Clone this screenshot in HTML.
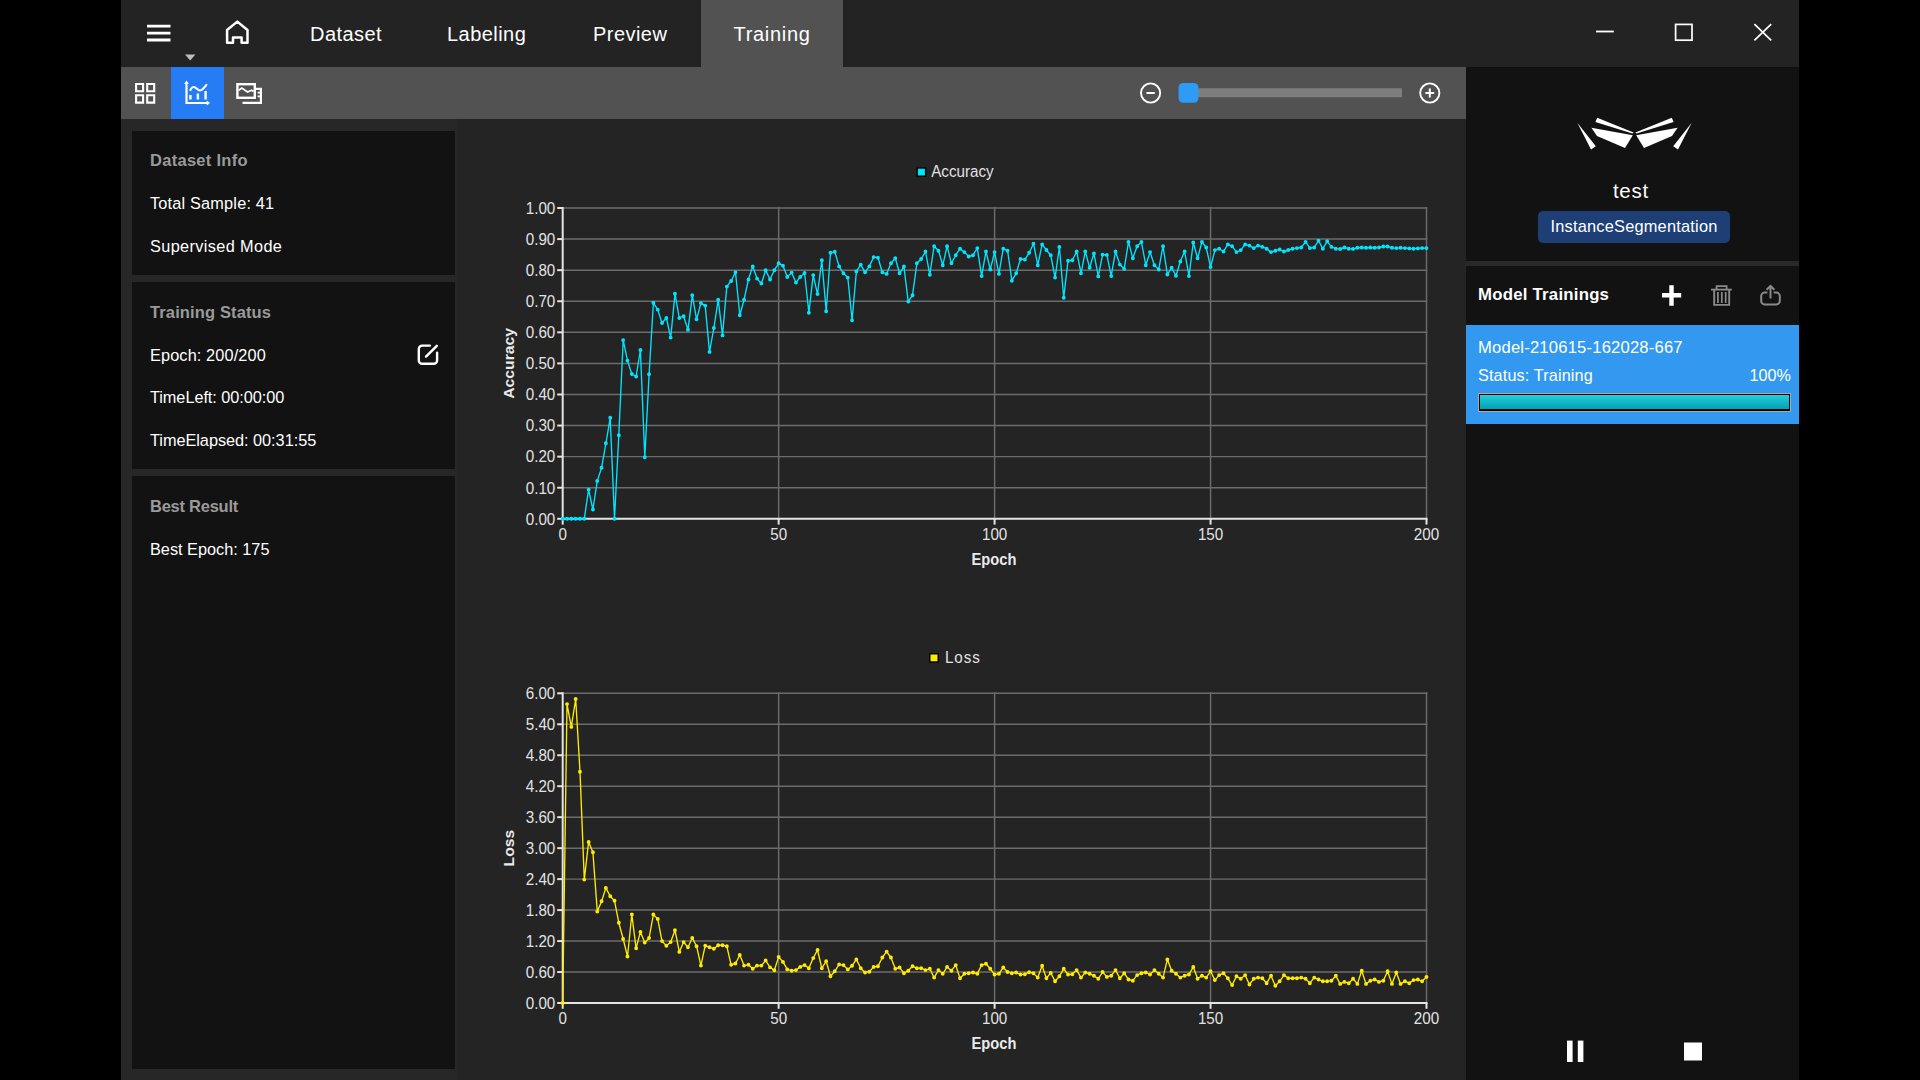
<!DOCTYPE html>
<html><head><meta charset="utf-8">
<style>
*{margin:0;padding:0;box-sizing:border-box}
html,body{width:1920px;height:1080px;overflow:hidden;background:#000}
body{font-family:"Liberation Sans",sans-serif;color:#fff;position:relative}
.abs{position:absolute}
#win{left:121px;top:0;width:1678px;height:1080px;background:#242424}
#titlebar{left:0;top:0;width:1678px;height:67px;background:#232323}
#tabact{left:580px;top:0;width:142px;height:67px;background:#525252}
.tab{top:22.2px;font-size:20px;line-height:24px;color:#fff;white-space:nowrap;letter-spacing:0.45px}
#toolbar{left:0;top:67px;width:1345px;height:52px;background:#525252}
#tbsel{left:50px;top:67px;width:52.5px;height:52px;background:#267cf5}
#leftbg{left:0;top:119px;width:336px;height:961px;background:#272727}
.card{left:10.5px;width:323.5px;background:#121212}
.ct{left:29px;font-size:16.5px;font-weight:bold;color:#9a9a9a;white-space:nowrap;line-height:20px}
.cl{left:29px;font-size:16.3px;color:#fff;white-space:nowrap;line-height:20px}
#right{left:1345px;top:67px;width:333px;height:1013px;background:#121212}
#rdiv{left:1345px;top:261px;width:333px;height:5px;background:#292929}
#item{left:1345px;top:325px;width:333px;height:98.5px;background:#3399f0}
svg{position:absolute;left:0;top:0}
.g{stroke:#6c6c6c;stroke-width:1.45}
.a{stroke:#e4e4e4;stroke-width:2}
.t{font-family:"Liberation Sans",sans-serif;font-size:15.2px;fill:#e2e2e2}
.tb{font-family:"Liberation Sans",sans-serif;font-size:14.7px;font-weight:bold;fill:#eaeaea}
</style></head><body>
<div id="win" class="abs">
  <div id="titlebar" class="abs"></div>
  <div id="tabact" class="abs"></div>
  <div class="abs tab" style="left:189px">Dataset</div>
  <div class="abs tab" style="left:326px">Labeling</div>
  <div class="abs tab" style="left:472px">Preview</div>
  <div class="abs tab" style="left:612.5px;letter-spacing:0.7px">Training</div>
  <div id="toolbar" class="abs"></div>
  <div id="tbsel" class="abs"></div>
  <div id="leftbg" class="abs"></div>
  <div class="abs card" style="top:131px;height:143.5px"></div>
  <div class="abs card" style="top:282px;height:186.5px"></div>
  <div class="abs card" style="top:476px;height:593.2px"></div>
  <div class="abs ct" style="top:149.9px;letter-spacing:0.28px">Dataset Info</div>
  <div class="abs cl" style="top:193.1px;letter-spacing:0.19px">Total Sample: 41</div>
  <div class="abs cl" style="top:235.8px;letter-spacing:0.37px">Supervised Mode</div>
  <div class="abs ct" style="top:301.7px;letter-spacing:0.13px">Training Status</div>
  <div class="abs cl" style="top:344.5px;letter-spacing:0.13px">Epoch: 200/200</div>
  <div class="abs cl" style="top:387px;letter-spacing:-0.05px">TimeLeft: 00:00:00</div>
  <div class="abs cl" style="top:429.8px;letter-spacing:-0.03px">TimeElapsed: 00:31:55</div>
  <div class="abs ct" style="top:496px;letter-spacing:-0.25px">Best Result</div>
  <div class="abs cl" style="top:539px">Best Epoch: 175</div>
  <div id="right" class="abs"></div>
  <div id="rdiv" class="abs"></div>
  <div id="item" class="abs"></div>
  <div class="abs" style="left:1345px;top:178px;width:333px;text-align:center;font-size:20.5px;line-height:24px;padding-right:3px;letter-spacing:0.8px;margin-top:1.2px">test</div>
  <div class="abs" style="left:1417px;top:211.2px;width:192px;height:32px;background:#1d3f76;border-radius:5px;text-align:center;font-size:16.4px;line-height:31.6px;letter-spacing:0.2px">InstanceSegmentation</div>
  <div class="abs" style="left:1357px;top:285.3px;font-size:16.8px;font-weight:bold;line-height:20px;white-space:nowrap;letter-spacing:0.23px">Model Trainings</div>
  <div class="abs" style="left:1357px;top:337.5px;font-size:16.6px;line-height:20px;white-space:nowrap;letter-spacing:0.2px">Model-210615-162028-667</div>
  <div class="abs" style="left:1357px;top:365px;font-size:16.2px;line-height:20px;white-space:nowrap;letter-spacing:0.15px">Status: Training</div>
  <div class="abs" style="left:1570px;top:365px;width:100px;text-align:right;font-size:16.2px;line-height:20px">100%</div>
  <div class="abs" style="left:1357px;top:392.5px;width:313px;height:19px;border:1px solid #a8a8a8;background:#000;padding:1.1px"><div style="width:100%;height:100%;background:linear-gradient(#22d0d8,#14b9c8 45%,#00a0b8)"></div></div>
</div>
<svg width="1920" height="1080" viewBox="0 0 1920 1080">
<line x1="562.7" y1="487.72" x2="1427.3" y2="487.72" class="g"/>
<line x1="562.7" y1="456.64" x2="1427.3" y2="456.64" class="g"/>
<line x1="562.7" y1="425.56" x2="1427.3" y2="425.56" class="g"/>
<line x1="562.7" y1="394.48" x2="1427.3" y2="394.48" class="g"/>
<line x1="562.7" y1="363.40" x2="1427.3" y2="363.40" class="g"/>
<line x1="562.7" y1="332.32" x2="1427.3" y2="332.32" class="g"/>
<line x1="562.7" y1="301.24" x2="1427.3" y2="301.24" class="g"/>
<line x1="562.7" y1="270.16" x2="1427.3" y2="270.16" class="g"/>
<line x1="562.7" y1="239.08" x2="1427.3" y2="239.08" class="g"/>
<line x1="562.7" y1="208.00" x2="1427.3" y2="208.00" class="g"/>
<line x1="778.65" y1="207.0" x2="778.65" y2="518.8" class="g"/>
<line x1="994.60" y1="207.0" x2="994.60" y2="518.8" class="g"/>
<line x1="1210.55" y1="207.0" x2="1210.55" y2="518.8" class="g"/>
<line x1="1426.50" y1="207.0" x2="1426.50" y2="518.8" class="g"/>
<line x1="562.7" y1="207.0" x2="562.7" y2="519.8" class="a"/>
<line x1="561.7" y1="518.8" x2="1427.5" y2="518.8" class="a"/>
<line x1="557.2" y1="518.80" x2="562.7" y2="518.80" class="a"/>
<text transform="translate(555.30,524.60) scale(1,1.07)" text-anchor="end" class="t">0.00</text>
<line x1="557.2" y1="487.72" x2="562.7" y2="487.72" class="a"/>
<text transform="translate(555.30,493.52) scale(1,1.07)" text-anchor="end" class="t">0.10</text>
<line x1="557.2" y1="456.64" x2="562.7" y2="456.64" class="a"/>
<text transform="translate(555.30,462.44) scale(1,1.07)" text-anchor="end" class="t">0.20</text>
<line x1="557.2" y1="425.56" x2="562.7" y2="425.56" class="a"/>
<text transform="translate(555.30,431.36) scale(1,1.07)" text-anchor="end" class="t">0.30</text>
<line x1="557.2" y1="394.48" x2="562.7" y2="394.48" class="a"/>
<text transform="translate(555.30,400.28) scale(1,1.07)" text-anchor="end" class="t">0.40</text>
<line x1="557.2" y1="363.40" x2="562.7" y2="363.40" class="a"/>
<text transform="translate(555.30,369.20) scale(1,1.07)" text-anchor="end" class="t">0.50</text>
<line x1="557.2" y1="332.32" x2="562.7" y2="332.32" class="a"/>
<text transform="translate(555.30,338.12) scale(1,1.07)" text-anchor="end" class="t">0.60</text>
<line x1="557.2" y1="301.24" x2="562.7" y2="301.24" class="a"/>
<text transform="translate(555.30,307.04) scale(1,1.07)" text-anchor="end" class="t">0.70</text>
<line x1="557.2" y1="270.16" x2="562.7" y2="270.16" class="a"/>
<text transform="translate(555.30,275.96) scale(1,1.07)" text-anchor="end" class="t">0.80</text>
<line x1="557.2" y1="239.08" x2="562.7" y2="239.08" class="a"/>
<text transform="translate(555.30,244.88) scale(1,1.07)" text-anchor="end" class="t">0.90</text>
<line x1="557.2" y1="208.00" x2="562.7" y2="208.00" class="a"/>
<text transform="translate(555.30,213.80) scale(1,1.07)" text-anchor="end" class="t">1.00</text>
<line x1="562.70" y1="518.8" x2="562.70" y2="524.5999999999999" class="a"/>
<text transform="translate(562.70,540.20) scale(1,1.07)" text-anchor="middle" class="t">0</text>
<line x1="778.65" y1="518.8" x2="778.65" y2="524.5999999999999" class="a"/>
<text transform="translate(778.65,540.20) scale(1,1.07)" text-anchor="middle" class="t">50</text>
<line x1="994.60" y1="518.8" x2="994.60" y2="524.5999999999999" class="a"/>
<text transform="translate(994.60,540.20) scale(1,1.07)" text-anchor="middle" class="t">100</text>
<line x1="1210.55" y1="518.8" x2="1210.55" y2="524.5999999999999" class="a"/>
<text transform="translate(1210.55,540.20) scale(1,1.07)" text-anchor="middle" class="t">150</text>
<line x1="1426.50" y1="518.8" x2="1426.50" y2="524.5999999999999" class="a"/>
<text transform="translate(1426.50,540.20) scale(1,1.07)" text-anchor="middle" class="t">200</text>
<polyline fill="none" stroke="#00e5ff" stroke-width="1.35" stroke-linejoin="round" points="562.7,518.8 567.0,518.8 571.3,518.8 575.7,518.8 580.0,518.8 584.3,518.8 588.6,489.6 592.9,509.5 597.3,480.9 601.6,467.8 605.9,443.3 610.2,417.8 614.5,518.8 618.8,435.2 623.2,340.1 627.5,360.6 631.8,374.0 636.1,376.5 640.4,350.0 644.8,457.3 649.1,374.3 653.4,302.8 657.7,309.6 662.0,323.0 666.4,318.0 670.7,337.6 675.0,293.8 679.3,318.0 683.6,316.2 688.0,329.8 692.3,295.3 696.6,319.3 700.9,303.1 705.2,305.6 709.5,351.9 713.9,328.0 718.2,299.7 722.5,335.4 726.8,286.6 731.1,281.0 735.5,272.3 739.8,315.2 744.1,299.7 748.4,279.5 752.7,266.4 757.1,278.6 761.4,283.5 765.7,270.2 770.0,279.5 774.3,270.2 778.7,263.3 783.0,265.8 787.3,277.0 791.6,272.6 795.9,282.6 800.2,277.0 804.6,273.0 808.9,312.7 813.2,275.1 817.5,294.1 821.8,260.2 826.2,311.2 830.5,252.8 834.8,251.8 839.1,266.4 843.4,273.3 847.8,277.6 852.1,320.2 856.4,271.4 860.7,264.6 865.0,272.3 869.3,266.4 873.7,257.1 878.0,257.7 882.3,272.3 886.6,273.9 890.9,263.3 895.3,258.3 899.6,273.3 903.9,266.4 908.2,301.6 912.5,295.3 916.9,263.3 921.2,259.0 925.5,251.5 929.8,274.8 934.1,246.2 938.5,250.7 942.8,265.2 947.1,246.2 951.4,263.3 955.7,255.2 960.0,248.7 964.4,252.1 968.7,256.5 973.0,255.2 977.3,248.1 981.6,276.1 986.0,251.5 990.3,269.5 994.6,252.1 998.9,273.9 1003.2,248.7 1007.6,250.7 1011.9,280.7 1016.2,273.3 1020.5,259.0 1024.8,259.6 1029.2,252.8 1033.5,243.7 1037.8,265.2 1042.1,244.4 1046.4,250.0 1050.7,255.2 1055.1,277.6 1059.4,246.9 1063.7,297.8 1068.0,260.8 1072.3,260.2 1076.7,251.5 1081.0,273.3 1085.3,251.5 1089.6,267.7 1093.9,253.4 1098.3,276.4 1102.6,254.6 1106.9,254.9 1111.2,276.1 1115.5,251.5 1119.9,264.6 1124.2,268.9 1128.5,241.9 1132.8,258.3 1137.1,246.2 1141.4,241.9 1145.8,265.2 1150.1,252.1 1154.4,265.2 1158.7,269.5 1163.0,246.2 1167.4,274.5 1171.7,267.7 1176.0,275.8 1180.3,261.5 1184.6,251.5 1189.0,276.1 1193.3,242.5 1197.6,258.3 1201.9,241.9 1206.2,247.5 1210.6,267.1 1214.9,250.1 1219.2,248.7 1223.5,251.5 1227.8,244.4 1232.1,246.2 1236.5,252.1 1240.8,250.1 1245.1,244.4 1249.4,245.6 1253.7,248.1 1258.1,245.6 1262.4,246.9 1266.7,248.7 1271.0,252.1 1275.3,250.7 1279.7,249.5 1284.0,251.5 1288.3,250.0 1292.6,248.7 1296.9,248.1 1301.2,247.5 1305.6,241.9 1309.9,248.1 1314.2,247.5 1318.5,240.6 1322.8,248.7 1327.2,241.3 1331.5,246.9 1335.8,248.7 1340.1,249.0 1344.4,247.5 1348.8,248.7 1353.1,248.9 1357.4,247.8 1361.7,247.5 1366.0,247.8 1370.4,247.5 1374.7,247.8 1379.0,247.5 1383.3,246.5 1387.6,246.5 1391.9,247.8 1396.3,248.1 1400.6,247.8 1404.9,248.1 1409.2,248.4 1413.5,248.7 1417.9,248.4 1422.2,248.1 1426.5,248.1"/>
<path d="M560.8,518.8a1.95,1.95 0 1 0 3.9,0a1.95,1.95 0 1 0 -3.9,0ZM565.1,518.8a1.95,1.95 0 1 0 3.9,0a1.95,1.95 0 1 0 -3.9,0ZM569.4,518.8a1.95,1.95 0 1 0 3.9,0a1.95,1.95 0 1 0 -3.9,0ZM573.7,518.8a1.95,1.95 0 1 0 3.9,0a1.95,1.95 0 1 0 -3.9,0ZM578.0,518.8a1.95,1.95 0 1 0 3.9,0a1.95,1.95 0 1 0 -3.9,0ZM582.3,518.8a1.95,1.95 0 1 0 3.9,0a1.95,1.95 0 1 0 -3.9,0ZM586.7,489.6a1.95,1.95 0 1 0 3.9,0a1.95,1.95 0 1 0 -3.9,0ZM591.0,509.5a1.95,1.95 0 1 0 3.9,0a1.95,1.95 0 1 0 -3.9,0ZM595.3,480.9a1.95,1.95 0 1 0 3.9,0a1.95,1.95 0 1 0 -3.9,0ZM599.6,467.8a1.95,1.95 0 1 0 3.9,0a1.95,1.95 0 1 0 -3.9,0ZM603.9,443.3a1.95,1.95 0 1 0 3.9,0a1.95,1.95 0 1 0 -3.9,0ZM608.3,417.8a1.95,1.95 0 1 0 3.9,0a1.95,1.95 0 1 0 -3.9,0ZM612.6,518.8a1.95,1.95 0 1 0 3.9,0a1.95,1.95 0 1 0 -3.9,0ZM616.9,435.2a1.95,1.95 0 1 0 3.9,0a1.95,1.95 0 1 0 -3.9,0ZM621.2,340.1a1.95,1.95 0 1 0 3.9,0a1.95,1.95 0 1 0 -3.9,0ZM625.5,360.6a1.95,1.95 0 1 0 3.9,0a1.95,1.95 0 1 0 -3.9,0ZM629.9,374.0a1.95,1.95 0 1 0 3.9,0a1.95,1.95 0 1 0 -3.9,0ZM634.2,376.5a1.95,1.95 0 1 0 3.9,0a1.95,1.95 0 1 0 -3.9,0ZM638.5,350.0a1.95,1.95 0 1 0 3.9,0a1.95,1.95 0 1 0 -3.9,0ZM642.8,457.3a1.95,1.95 0 1 0 3.9,0a1.95,1.95 0 1 0 -3.9,0ZM647.1,374.3a1.95,1.95 0 1 0 3.9,0a1.95,1.95 0 1 0 -3.9,0ZM651.4,302.8a1.95,1.95 0 1 0 3.9,0a1.95,1.95 0 1 0 -3.9,0ZM655.8,309.6a1.95,1.95 0 1 0 3.9,0a1.95,1.95 0 1 0 -3.9,0ZM660.1,323.0a1.95,1.95 0 1 0 3.9,0a1.95,1.95 0 1 0 -3.9,0ZM664.4,318.0a1.95,1.95 0 1 0 3.9,0a1.95,1.95 0 1 0 -3.9,0ZM668.7,337.6a1.95,1.95 0 1 0 3.9,0a1.95,1.95 0 1 0 -3.9,0ZM673.0,293.8a1.95,1.95 0 1 0 3.9,0a1.95,1.95 0 1 0 -3.9,0ZM677.4,318.0a1.95,1.95 0 1 0 3.9,0a1.95,1.95 0 1 0 -3.9,0ZM681.7,316.2a1.95,1.95 0 1 0 3.9,0a1.95,1.95 0 1 0 -3.9,0ZM686.0,329.8a1.95,1.95 0 1 0 3.9,0a1.95,1.95 0 1 0 -3.9,0ZM690.3,295.3a1.95,1.95 0 1 0 3.9,0a1.95,1.95 0 1 0 -3.9,0ZM694.6,319.3a1.95,1.95 0 1 0 3.9,0a1.95,1.95 0 1 0 -3.9,0ZM699.0,303.1a1.95,1.95 0 1 0 3.9,0a1.95,1.95 0 1 0 -3.9,0ZM703.3,305.6a1.95,1.95 0 1 0 3.9,0a1.95,1.95 0 1 0 -3.9,0ZM707.6,351.9a1.95,1.95 0 1 0 3.9,0a1.95,1.95 0 1 0 -3.9,0ZM711.9,328.0a1.95,1.95 0 1 0 3.9,0a1.95,1.95 0 1 0 -3.9,0ZM716.2,299.7a1.95,1.95 0 1 0 3.9,0a1.95,1.95 0 1 0 -3.9,0ZM720.6,335.4a1.95,1.95 0 1 0 3.9,0a1.95,1.95 0 1 0 -3.9,0ZM724.9,286.6a1.95,1.95 0 1 0 3.9,0a1.95,1.95 0 1 0 -3.9,0ZM729.2,281.0a1.95,1.95 0 1 0 3.9,0a1.95,1.95 0 1 0 -3.9,0ZM733.5,272.3a1.95,1.95 0 1 0 3.9,0a1.95,1.95 0 1 0 -3.9,0ZM737.8,315.2a1.95,1.95 0 1 0 3.9,0a1.95,1.95 0 1 0 -3.9,0ZM742.1,299.7a1.95,1.95 0 1 0 3.9,0a1.95,1.95 0 1 0 -3.9,0ZM746.5,279.5a1.95,1.95 0 1 0 3.9,0a1.95,1.95 0 1 0 -3.9,0ZM750.8,266.4a1.95,1.95 0 1 0 3.9,0a1.95,1.95 0 1 0 -3.9,0ZM755.1,278.6a1.95,1.95 0 1 0 3.9,0a1.95,1.95 0 1 0 -3.9,0ZM759.4,283.5a1.95,1.95 0 1 0 3.9,0a1.95,1.95 0 1 0 -3.9,0ZM763.7,270.2a1.95,1.95 0 1 0 3.9,0a1.95,1.95 0 1 0 -3.9,0ZM768.1,279.5a1.95,1.95 0 1 0 3.9,0a1.95,1.95 0 1 0 -3.9,0ZM772.4,270.2a1.95,1.95 0 1 0 3.9,0a1.95,1.95 0 1 0 -3.9,0ZM776.7,263.3a1.95,1.95 0 1 0 3.9,0a1.95,1.95 0 1 0 -3.9,0ZM781.0,265.8a1.95,1.95 0 1 0 3.9,0a1.95,1.95 0 1 0 -3.9,0ZM785.3,277.0a1.95,1.95 0 1 0 3.9,0a1.95,1.95 0 1 0 -3.9,0ZM789.7,272.6a1.95,1.95 0 1 0 3.9,0a1.95,1.95 0 1 0 -3.9,0ZM794.0,282.6a1.95,1.95 0 1 0 3.9,0a1.95,1.95 0 1 0 -3.9,0ZM798.3,277.0a1.95,1.95 0 1 0 3.9,0a1.95,1.95 0 1 0 -3.9,0ZM802.6,273.0a1.95,1.95 0 1 0 3.9,0a1.95,1.95 0 1 0 -3.9,0ZM806.9,312.7a1.95,1.95 0 1 0 3.9,0a1.95,1.95 0 1 0 -3.9,0ZM811.3,275.1a1.95,1.95 0 1 0 3.9,0a1.95,1.95 0 1 0 -3.9,0ZM815.6,294.1a1.95,1.95 0 1 0 3.9,0a1.95,1.95 0 1 0 -3.9,0ZM819.9,260.2a1.95,1.95 0 1 0 3.9,0a1.95,1.95 0 1 0 -3.9,0ZM824.2,311.2a1.95,1.95 0 1 0 3.9,0a1.95,1.95 0 1 0 -3.9,0ZM828.5,252.8a1.95,1.95 0 1 0 3.9,0a1.95,1.95 0 1 0 -3.9,0ZM832.8,251.8a1.95,1.95 0 1 0 3.9,0a1.95,1.95 0 1 0 -3.9,0ZM837.2,266.4a1.95,1.95 0 1 0 3.9,0a1.95,1.95 0 1 0 -3.9,0ZM841.5,273.3a1.95,1.95 0 1 0 3.9,0a1.95,1.95 0 1 0 -3.9,0ZM845.8,277.6a1.95,1.95 0 1 0 3.9,0a1.95,1.95 0 1 0 -3.9,0ZM850.1,320.2a1.95,1.95 0 1 0 3.9,0a1.95,1.95 0 1 0 -3.9,0ZM854.4,271.4a1.95,1.95 0 1 0 3.9,0a1.95,1.95 0 1 0 -3.9,0ZM858.8,264.6a1.95,1.95 0 1 0 3.9,0a1.95,1.95 0 1 0 -3.9,0ZM863.1,272.3a1.95,1.95 0 1 0 3.9,0a1.95,1.95 0 1 0 -3.9,0ZM867.4,266.4a1.95,1.95 0 1 0 3.9,0a1.95,1.95 0 1 0 -3.9,0ZM871.7,257.1a1.95,1.95 0 1 0 3.9,0a1.95,1.95 0 1 0 -3.9,0ZM876.0,257.7a1.95,1.95 0 1 0 3.9,0a1.95,1.95 0 1 0 -3.9,0ZM880.4,272.3a1.95,1.95 0 1 0 3.9,0a1.95,1.95 0 1 0 -3.9,0ZM884.7,273.9a1.95,1.95 0 1 0 3.9,0a1.95,1.95 0 1 0 -3.9,0ZM889.0,263.3a1.95,1.95 0 1 0 3.9,0a1.95,1.95 0 1 0 -3.9,0ZM893.3,258.3a1.95,1.95 0 1 0 3.9,0a1.95,1.95 0 1 0 -3.9,0ZM897.6,273.3a1.95,1.95 0 1 0 3.9,0a1.95,1.95 0 1 0 -3.9,0ZM902.0,266.4a1.95,1.95 0 1 0 3.9,0a1.95,1.95 0 1 0 -3.9,0ZM906.3,301.6a1.95,1.95 0 1 0 3.9,0a1.95,1.95 0 1 0 -3.9,0ZM910.6,295.3a1.95,1.95 0 1 0 3.9,0a1.95,1.95 0 1 0 -3.9,0ZM914.9,263.3a1.95,1.95 0 1 0 3.9,0a1.95,1.95 0 1 0 -3.9,0ZM919.2,259.0a1.95,1.95 0 1 0 3.9,0a1.95,1.95 0 1 0 -3.9,0ZM923.5,251.5a1.95,1.95 0 1 0 3.9,0a1.95,1.95 0 1 0 -3.9,0ZM927.9,274.8a1.95,1.95 0 1 0 3.9,0a1.95,1.95 0 1 0 -3.9,0ZM932.2,246.2a1.95,1.95 0 1 0 3.9,0a1.95,1.95 0 1 0 -3.9,0ZM936.5,250.7a1.95,1.95 0 1 0 3.9,0a1.95,1.95 0 1 0 -3.9,0ZM940.8,265.2a1.95,1.95 0 1 0 3.9,0a1.95,1.95 0 1 0 -3.9,0ZM945.1,246.2a1.95,1.95 0 1 0 3.9,0a1.95,1.95 0 1 0 -3.9,0ZM949.5,263.3a1.95,1.95 0 1 0 3.9,0a1.95,1.95 0 1 0 -3.9,0ZM953.8,255.2a1.95,1.95 0 1 0 3.9,0a1.95,1.95 0 1 0 -3.9,0ZM958.1,248.7a1.95,1.95 0 1 0 3.9,0a1.95,1.95 0 1 0 -3.9,0ZM962.4,252.1a1.95,1.95 0 1 0 3.9,0a1.95,1.95 0 1 0 -3.9,0ZM966.7,256.5a1.95,1.95 0 1 0 3.9,0a1.95,1.95 0 1 0 -3.9,0ZM971.1,255.2a1.95,1.95 0 1 0 3.9,0a1.95,1.95 0 1 0 -3.9,0ZM975.4,248.1a1.95,1.95 0 1 0 3.9,0a1.95,1.95 0 1 0 -3.9,0ZM979.7,276.1a1.95,1.95 0 1 0 3.9,0a1.95,1.95 0 1 0 -3.9,0ZM984.0,251.5a1.95,1.95 0 1 0 3.9,0a1.95,1.95 0 1 0 -3.9,0ZM988.3,269.5a1.95,1.95 0 1 0 3.9,0a1.95,1.95 0 1 0 -3.9,0ZM992.6,252.1a1.95,1.95 0 1 0 3.9,0a1.95,1.95 0 1 0 -3.9,0ZM997.0,273.9a1.95,1.95 0 1 0 3.9,0a1.95,1.95 0 1 0 -3.9,0ZM1001.3,248.7a1.95,1.95 0 1 0 3.9,0a1.95,1.95 0 1 0 -3.9,0ZM1005.6,250.7a1.95,1.95 0 1 0 3.9,0a1.95,1.95 0 1 0 -3.9,0ZM1009.9,280.7a1.95,1.95 0 1 0 3.9,0a1.95,1.95 0 1 0 -3.9,0ZM1014.2,273.3a1.95,1.95 0 1 0 3.9,0a1.95,1.95 0 1 0 -3.9,0ZM1018.6,259.0a1.95,1.95 0 1 0 3.9,0a1.95,1.95 0 1 0 -3.9,0ZM1022.9,259.6a1.95,1.95 0 1 0 3.9,0a1.95,1.95 0 1 0 -3.9,0ZM1027.2,252.8a1.95,1.95 0 1 0 3.9,0a1.95,1.95 0 1 0 -3.9,0ZM1031.5,243.7a1.95,1.95 0 1 0 3.9,0a1.95,1.95 0 1 0 -3.9,0ZM1035.8,265.2a1.95,1.95 0 1 0 3.9,0a1.95,1.95 0 1 0 -3.9,0ZM1040.2,244.4a1.95,1.95 0 1 0 3.9,0a1.95,1.95 0 1 0 -3.9,0ZM1044.5,250.0a1.95,1.95 0 1 0 3.9,0a1.95,1.95 0 1 0 -3.9,0ZM1048.8,255.2a1.95,1.95 0 1 0 3.9,0a1.95,1.95 0 1 0 -3.9,0ZM1053.1,277.6a1.95,1.95 0 1 0 3.9,0a1.95,1.95 0 1 0 -3.9,0ZM1057.4,246.9a1.95,1.95 0 1 0 3.9,0a1.95,1.95 0 1 0 -3.9,0ZM1061.8,297.8a1.95,1.95 0 1 0 3.9,0a1.95,1.95 0 1 0 -3.9,0ZM1066.1,260.8a1.95,1.95 0 1 0 3.9,0a1.95,1.95 0 1 0 -3.9,0ZM1070.4,260.2a1.95,1.95 0 1 0 3.9,0a1.95,1.95 0 1 0 -3.9,0ZM1074.7,251.5a1.95,1.95 0 1 0 3.9,0a1.95,1.95 0 1 0 -3.9,0ZM1079.0,273.3a1.95,1.95 0 1 0 3.9,0a1.95,1.95 0 1 0 -3.9,0ZM1083.3,251.5a1.95,1.95 0 1 0 3.9,0a1.95,1.95 0 1 0 -3.9,0ZM1087.7,267.7a1.95,1.95 0 1 0 3.9,0a1.95,1.95 0 1 0 -3.9,0ZM1092.0,253.4a1.95,1.95 0 1 0 3.9,0a1.95,1.95 0 1 0 -3.9,0ZM1096.3,276.4a1.95,1.95 0 1 0 3.9,0a1.95,1.95 0 1 0 -3.9,0ZM1100.6,254.6a1.95,1.95 0 1 0 3.9,0a1.95,1.95 0 1 0 -3.9,0ZM1104.9,254.9a1.95,1.95 0 1 0 3.9,0a1.95,1.95 0 1 0 -3.9,0ZM1109.3,276.1a1.95,1.95 0 1 0 3.9,0a1.95,1.95 0 1 0 -3.9,0ZM1113.6,251.5a1.95,1.95 0 1 0 3.9,0a1.95,1.95 0 1 0 -3.9,0ZM1117.9,264.6a1.95,1.95 0 1 0 3.9,0a1.95,1.95 0 1 0 -3.9,0ZM1122.2,268.9a1.95,1.95 0 1 0 3.9,0a1.95,1.95 0 1 0 -3.9,0ZM1126.5,241.9a1.95,1.95 0 1 0 3.9,0a1.95,1.95 0 1 0 -3.9,0ZM1130.9,258.3a1.95,1.95 0 1 0 3.9,0a1.95,1.95 0 1 0 -3.9,0ZM1135.2,246.2a1.95,1.95 0 1 0 3.9,0a1.95,1.95 0 1 0 -3.9,0ZM1139.5,241.9a1.95,1.95 0 1 0 3.9,0a1.95,1.95 0 1 0 -3.9,0ZM1143.8,265.2a1.95,1.95 0 1 0 3.9,0a1.95,1.95 0 1 0 -3.9,0ZM1148.1,252.1a1.95,1.95 0 1 0 3.9,0a1.95,1.95 0 1 0 -3.9,0ZM1152.5,265.2a1.95,1.95 0 1 0 3.9,0a1.95,1.95 0 1 0 -3.9,0ZM1156.8,269.5a1.95,1.95 0 1 0 3.9,0a1.95,1.95 0 1 0 -3.9,0ZM1161.1,246.2a1.95,1.95 0 1 0 3.9,0a1.95,1.95 0 1 0 -3.9,0ZM1165.4,274.5a1.95,1.95 0 1 0 3.9,0a1.95,1.95 0 1 0 -3.9,0ZM1169.7,267.7a1.95,1.95 0 1 0 3.9,0a1.95,1.95 0 1 0 -3.9,0ZM1174.0,275.8a1.95,1.95 0 1 0 3.9,0a1.95,1.95 0 1 0 -3.9,0ZM1178.4,261.5a1.95,1.95 0 1 0 3.9,0a1.95,1.95 0 1 0 -3.9,0ZM1182.7,251.5a1.95,1.95 0 1 0 3.9,0a1.95,1.95 0 1 0 -3.9,0ZM1187.0,276.1a1.95,1.95 0 1 0 3.9,0a1.95,1.95 0 1 0 -3.9,0ZM1191.3,242.5a1.95,1.95 0 1 0 3.9,0a1.95,1.95 0 1 0 -3.9,0ZM1195.6,258.3a1.95,1.95 0 1 0 3.9,0a1.95,1.95 0 1 0 -3.9,0ZM1200.0,241.9a1.95,1.95 0 1 0 3.9,0a1.95,1.95 0 1 0 -3.9,0ZM1204.3,247.5a1.95,1.95 0 1 0 3.9,0a1.95,1.95 0 1 0 -3.9,0ZM1208.6,267.1a1.95,1.95 0 1 0 3.9,0a1.95,1.95 0 1 0 -3.9,0ZM1212.9,250.1a1.95,1.95 0 1 0 3.9,0a1.95,1.95 0 1 0 -3.9,0ZM1217.2,248.7a1.95,1.95 0 1 0 3.9,0a1.95,1.95 0 1 0 -3.9,0ZM1221.6,251.5a1.95,1.95 0 1 0 3.9,0a1.95,1.95 0 1 0 -3.9,0ZM1225.9,244.4a1.95,1.95 0 1 0 3.9,0a1.95,1.95 0 1 0 -3.9,0ZM1230.2,246.2a1.95,1.95 0 1 0 3.9,0a1.95,1.95 0 1 0 -3.9,0ZM1234.5,252.1a1.95,1.95 0 1 0 3.9,0a1.95,1.95 0 1 0 -3.9,0ZM1238.8,250.1a1.95,1.95 0 1 0 3.9,0a1.95,1.95 0 1 0 -3.9,0ZM1243.2,244.4a1.95,1.95 0 1 0 3.9,0a1.95,1.95 0 1 0 -3.9,0ZM1247.5,245.6a1.95,1.95 0 1 0 3.9,0a1.95,1.95 0 1 0 -3.9,0ZM1251.8,248.1a1.95,1.95 0 1 0 3.9,0a1.95,1.95 0 1 0 -3.9,0ZM1256.1,245.6a1.95,1.95 0 1 0 3.9,0a1.95,1.95 0 1 0 -3.9,0ZM1260.4,246.9a1.95,1.95 0 1 0 3.9,0a1.95,1.95 0 1 0 -3.9,0ZM1264.7,248.7a1.95,1.95 0 1 0 3.9,0a1.95,1.95 0 1 0 -3.9,0ZM1269.1,252.1a1.95,1.95 0 1 0 3.9,0a1.95,1.95 0 1 0 -3.9,0ZM1273.4,250.7a1.95,1.95 0 1 0 3.9,0a1.95,1.95 0 1 0 -3.9,0ZM1277.7,249.5a1.95,1.95 0 1 0 3.9,0a1.95,1.95 0 1 0 -3.9,0ZM1282.0,251.5a1.95,1.95 0 1 0 3.9,0a1.95,1.95 0 1 0 -3.9,0ZM1286.3,250.0a1.95,1.95 0 1 0 3.9,0a1.95,1.95 0 1 0 -3.9,0ZM1290.7,248.7a1.95,1.95 0 1 0 3.9,0a1.95,1.95 0 1 0 -3.9,0ZM1295.0,248.1a1.95,1.95 0 1 0 3.9,0a1.95,1.95 0 1 0 -3.9,0ZM1299.3,247.5a1.95,1.95 0 1 0 3.9,0a1.95,1.95 0 1 0 -3.9,0ZM1303.6,241.9a1.95,1.95 0 1 0 3.9,0a1.95,1.95 0 1 0 -3.9,0ZM1307.9,248.1a1.95,1.95 0 1 0 3.9,0a1.95,1.95 0 1 0 -3.9,0ZM1312.3,247.5a1.95,1.95 0 1 0 3.9,0a1.95,1.95 0 1 0 -3.9,0ZM1316.6,240.6a1.95,1.95 0 1 0 3.9,0a1.95,1.95 0 1 0 -3.9,0ZM1320.9,248.7a1.95,1.95 0 1 0 3.9,0a1.95,1.95 0 1 0 -3.9,0ZM1325.2,241.3a1.95,1.95 0 1 0 3.9,0a1.95,1.95 0 1 0 -3.9,0ZM1329.5,246.9a1.95,1.95 0 1 0 3.9,0a1.95,1.95 0 1 0 -3.9,0ZM1333.9,248.7a1.95,1.95 0 1 0 3.9,0a1.95,1.95 0 1 0 -3.9,0ZM1338.2,249.0a1.95,1.95 0 1 0 3.9,0a1.95,1.95 0 1 0 -3.9,0ZM1342.5,247.5a1.95,1.95 0 1 0 3.9,0a1.95,1.95 0 1 0 -3.9,0ZM1346.8,248.7a1.95,1.95 0 1 0 3.9,0a1.95,1.95 0 1 0 -3.9,0ZM1351.1,248.9a1.95,1.95 0 1 0 3.9,0a1.95,1.95 0 1 0 -3.9,0ZM1355.4,247.8a1.95,1.95 0 1 0 3.9,0a1.95,1.95 0 1 0 -3.9,0ZM1359.8,247.5a1.95,1.95 0 1 0 3.9,0a1.95,1.95 0 1 0 -3.9,0ZM1364.1,247.8a1.95,1.95 0 1 0 3.9,0a1.95,1.95 0 1 0 -3.9,0ZM1368.4,247.5a1.95,1.95 0 1 0 3.9,0a1.95,1.95 0 1 0 -3.9,0ZM1372.7,247.8a1.95,1.95 0 1 0 3.9,0a1.95,1.95 0 1 0 -3.9,0ZM1377.0,247.5a1.95,1.95 0 1 0 3.9,0a1.95,1.95 0 1 0 -3.9,0ZM1381.4,246.5a1.95,1.95 0 1 0 3.9,0a1.95,1.95 0 1 0 -3.9,0ZM1385.7,246.5a1.95,1.95 0 1 0 3.9,0a1.95,1.95 0 1 0 -3.9,0ZM1390.0,247.8a1.95,1.95 0 1 0 3.9,0a1.95,1.95 0 1 0 -3.9,0ZM1394.3,248.1a1.95,1.95 0 1 0 3.9,0a1.95,1.95 0 1 0 -3.9,0ZM1398.6,247.8a1.95,1.95 0 1 0 3.9,0a1.95,1.95 0 1 0 -3.9,0ZM1403.0,248.1a1.95,1.95 0 1 0 3.9,0a1.95,1.95 0 1 0 -3.9,0ZM1407.3,248.4a1.95,1.95 0 1 0 3.9,0a1.95,1.95 0 1 0 -3.9,0ZM1411.6,248.7a1.95,1.95 0 1 0 3.9,0a1.95,1.95 0 1 0 -3.9,0ZM1415.9,248.4a1.95,1.95 0 1 0 3.9,0a1.95,1.95 0 1 0 -3.9,0ZM1420.2,248.1a1.95,1.95 0 1 0 3.9,0a1.95,1.95 0 1 0 -3.9,0ZM1424.5,248.1a1.95,1.95 0 1 0 3.9,0a1.95,1.95 0 1 0 -3.9,0Z" fill="#00e5ff"/>
<text transform="translate(994.00,564.60) scale(1,1.07)" text-anchor="middle" class="tb">Epoch</text>
<text transform="translate(514.2,363.4) rotate(-90) scale(1.07,1)" text-anchor="middle" class="tb">Accuracy</text>
<rect x="917.1999999999999" y="168.0" width="8.4" height="8.2" fill="#00e5ff" stroke="#000" stroke-width="1.4"/>
<text transform="translate(931.20,177.00) scale(1,1.07)" text-anchor="start" class="t">Accuracy</text>
<line x1="562.7" y1="972.03" x2="1427.3" y2="972.03" class="g"/>
<line x1="562.7" y1="941.06" x2="1427.3" y2="941.06" class="g"/>
<line x1="562.7" y1="910.09" x2="1427.3" y2="910.09" class="g"/>
<line x1="562.7" y1="879.12" x2="1427.3" y2="879.12" class="g"/>
<line x1="562.7" y1="848.15" x2="1427.3" y2="848.15" class="g"/>
<line x1="562.7" y1="817.18" x2="1427.3" y2="817.18" class="g"/>
<line x1="562.7" y1="786.21" x2="1427.3" y2="786.21" class="g"/>
<line x1="562.7" y1="755.24" x2="1427.3" y2="755.24" class="g"/>
<line x1="562.7" y1="724.27" x2="1427.3" y2="724.27" class="g"/>
<line x1="562.7" y1="693.30" x2="1427.3" y2="693.30" class="g"/>
<line x1="778.65" y1="692.3" x2="778.65" y2="1003.0" class="g"/>
<line x1="994.60" y1="692.3" x2="994.60" y2="1003.0" class="g"/>
<line x1="1210.55" y1="692.3" x2="1210.55" y2="1003.0" class="g"/>
<line x1="1426.50" y1="692.3" x2="1426.50" y2="1003.0" class="g"/>
<line x1="562.7" y1="692.3" x2="562.7" y2="1004.0" class="a"/>
<line x1="561.7" y1="1003.0" x2="1427.5" y2="1003.0" class="a"/>
<line x1="557.2" y1="1003.00" x2="562.7" y2="1003.00" class="a"/>
<text transform="translate(555.30,1008.80) scale(1,1.07)" text-anchor="end" class="t">0.00</text>
<line x1="557.2" y1="972.03" x2="562.7" y2="972.03" class="a"/>
<text transform="translate(555.30,977.83) scale(1,1.07)" text-anchor="end" class="t">0.60</text>
<line x1="557.2" y1="941.06" x2="562.7" y2="941.06" class="a"/>
<text transform="translate(555.30,946.86) scale(1,1.07)" text-anchor="end" class="t">1.20</text>
<line x1="557.2" y1="910.09" x2="562.7" y2="910.09" class="a"/>
<text transform="translate(555.30,915.89) scale(1,1.07)" text-anchor="end" class="t">1.80</text>
<line x1="557.2" y1="879.12" x2="562.7" y2="879.12" class="a"/>
<text transform="translate(555.30,884.92) scale(1,1.07)" text-anchor="end" class="t">2.40</text>
<line x1="557.2" y1="848.15" x2="562.7" y2="848.15" class="a"/>
<text transform="translate(555.30,853.95) scale(1,1.07)" text-anchor="end" class="t">3.00</text>
<line x1="557.2" y1="817.18" x2="562.7" y2="817.18" class="a"/>
<text transform="translate(555.30,822.98) scale(1,1.07)" text-anchor="end" class="t">3.60</text>
<line x1="557.2" y1="786.21" x2="562.7" y2="786.21" class="a"/>
<text transform="translate(555.30,792.01) scale(1,1.07)" text-anchor="end" class="t">4.20</text>
<line x1="557.2" y1="755.24" x2="562.7" y2="755.24" class="a"/>
<text transform="translate(555.30,761.04) scale(1,1.07)" text-anchor="end" class="t">4.80</text>
<line x1="557.2" y1="724.27" x2="562.7" y2="724.27" class="a"/>
<text transform="translate(555.30,730.07) scale(1,1.07)" text-anchor="end" class="t">5.40</text>
<line x1="557.2" y1="693.30" x2="562.7" y2="693.30" class="a"/>
<text transform="translate(555.30,699.10) scale(1,1.07)" text-anchor="end" class="t">6.00</text>
<line x1="562.70" y1="1003.0" x2="562.70" y2="1008.8" class="a"/>
<text transform="translate(562.70,1024.40) scale(1,1.07)" text-anchor="middle" class="t">0</text>
<line x1="778.65" y1="1003.0" x2="778.65" y2="1008.8" class="a"/>
<text transform="translate(778.65,1024.40) scale(1,1.07)" text-anchor="middle" class="t">50</text>
<line x1="994.60" y1="1003.0" x2="994.60" y2="1008.8" class="a"/>
<text transform="translate(994.60,1024.40) scale(1,1.07)" text-anchor="middle" class="t">100</text>
<line x1="1210.55" y1="1003.0" x2="1210.55" y2="1008.8" class="a"/>
<text transform="translate(1210.55,1024.40) scale(1,1.07)" text-anchor="middle" class="t">150</text>
<line x1="1426.50" y1="1003.0" x2="1426.50" y2="1008.8" class="a"/>
<text transform="translate(1426.50,1024.40) scale(1,1.07)" text-anchor="middle" class="t">200</text>
<polyline fill="none" stroke="#ffea00" stroke-width="1.35" stroke-linejoin="round" points="562.7,1003.0 567.0,704.1 571.3,726.9 575.7,699.0 580.0,771.8 584.3,879.6 588.6,842.0 592.9,852.3 597.3,911.6 601.6,901.3 605.9,887.9 610.2,896.2 614.5,900.8 618.8,922.7 623.2,939.0 627.5,956.5 631.8,914.5 636.1,948.3 640.4,931.9 644.8,942.6 649.1,938.0 653.4,914.5 657.7,918.9 662.0,941.1 666.4,945.7 670.7,942.1 675.0,930.2 679.3,951.9 683.6,942.1 688.0,947.3 692.3,938.0 696.6,946.2 700.9,965.6 705.2,945.7 709.5,947.3 713.9,948.8 718.2,945.2 722.5,945.2 726.8,946.2 731.1,964.8 735.5,963.5 739.8,955.0 744.1,965.6 748.4,964.8 752.7,968.7 757.1,965.6 761.4,965.6 765.7,960.4 770.0,967.4 774.3,970.2 778.7,956.9 783.0,961.9 787.3,969.4 791.6,970.7 795.9,970.1 800.2,966.9 804.6,965.1 808.9,968.2 813.2,958.1 817.5,950.0 821.8,968.2 826.2,961.3 830.5,976.3 834.8,971.3 839.1,964.4 843.4,965.1 847.8,969.4 852.1,965.7 856.4,959.4 860.7,968.2 865.0,972.5 869.3,971.7 873.7,966.9 878.0,966.3 882.3,957.5 886.6,951.6 890.9,957.5 895.3,968.8 899.6,967.5 903.9,973.2 908.2,970.7 912.5,966.3 916.9,968.2 921.2,968.2 925.5,970.1 929.8,968.8 934.1,977.6 938.5,970.1 942.8,973.8 947.1,966.9 951.4,970.7 955.7,965.1 960.0,978.2 964.4,973.8 968.7,973.2 973.0,972.5 977.3,973.8 981.6,965.1 986.0,963.8 990.3,968.8 994.6,974.5 998.9,973.8 1003.2,967.5 1007.6,972.0 1011.9,973.2 1016.2,972.5 1020.5,974.5 1024.8,974.2 1029.2,972.2 1033.5,973.2 1037.8,977.6 1042.1,965.7 1046.4,978.2 1050.7,972.9 1055.1,981.3 1059.4,976.3 1063.7,968.8 1068.0,974.5 1072.3,974.2 1076.7,970.1 1081.0,977.6 1085.3,972.5 1089.6,973.8 1093.9,975.7 1098.3,978.8 1102.6,972.0 1106.9,976.9 1111.2,975.7 1115.5,970.1 1119.9,978.2 1124.2,973.2 1128.5,979.5 1132.8,980.7 1137.1,975.1 1141.4,973.2 1145.8,972.5 1150.1,974.5 1154.4,970.1 1158.7,973.8 1163.0,977.6 1167.4,959.4 1171.7,970.7 1176.0,973.8 1180.3,977.6 1184.6,975.7 1189.0,974.5 1193.3,966.9 1197.6,978.8 1201.9,975.7 1206.2,977.6 1210.6,971.3 1214.9,980.1 1219.2,975.1 1223.5,973.2 1227.8,978.2 1232.1,985.1 1236.5,976.3 1240.8,978.8 1245.1,975.1 1249.4,984.5 1253.7,978.8 1258.1,977.6 1262.4,978.2 1266.7,983.2 1271.0,975.7 1275.3,985.7 1279.7,981.3 1284.0,975.1 1288.3,978.2 1292.6,978.2 1296.9,978.2 1301.2,977.6 1305.6,978.8 1309.9,983.2 1314.2,977.6 1318.5,979.5 1322.8,981.3 1327.2,981.3 1331.5,980.7 1335.8,975.7 1340.1,983.9 1344.4,981.9 1348.8,983.2 1353.1,978.8 1357.4,983.9 1361.7,970.7 1366.0,983.9 1370.4,980.7 1374.7,979.5 1379.0,981.9 1383.3,980.7 1387.6,971.3 1391.9,983.9 1396.3,972.5 1400.6,983.9 1404.9,981.3 1409.2,983.2 1413.5,980.1 1417.9,979.5 1422.2,981.3 1426.5,976.9"/>
<path d="M560.8,1003.0a1.95,1.95 0 1 0 3.9,0a1.95,1.95 0 1 0 -3.9,0ZM565.1,704.1a1.95,1.95 0 1 0 3.9,0a1.95,1.95 0 1 0 -3.9,0ZM569.4,726.9a1.95,1.95 0 1 0 3.9,0a1.95,1.95 0 1 0 -3.9,0ZM573.7,699.0a1.95,1.95 0 1 0 3.9,0a1.95,1.95 0 1 0 -3.9,0ZM578.0,771.8a1.95,1.95 0 1 0 3.9,0a1.95,1.95 0 1 0 -3.9,0ZM582.3,879.6a1.95,1.95 0 1 0 3.9,0a1.95,1.95 0 1 0 -3.9,0ZM586.7,842.0a1.95,1.95 0 1 0 3.9,0a1.95,1.95 0 1 0 -3.9,0ZM591.0,852.3a1.95,1.95 0 1 0 3.9,0a1.95,1.95 0 1 0 -3.9,0ZM595.3,911.6a1.95,1.95 0 1 0 3.9,0a1.95,1.95 0 1 0 -3.9,0ZM599.6,901.3a1.95,1.95 0 1 0 3.9,0a1.95,1.95 0 1 0 -3.9,0ZM603.9,887.9a1.95,1.95 0 1 0 3.9,0a1.95,1.95 0 1 0 -3.9,0ZM608.3,896.2a1.95,1.95 0 1 0 3.9,0a1.95,1.95 0 1 0 -3.9,0ZM612.6,900.8a1.95,1.95 0 1 0 3.9,0a1.95,1.95 0 1 0 -3.9,0ZM616.9,922.7a1.95,1.95 0 1 0 3.9,0a1.95,1.95 0 1 0 -3.9,0ZM621.2,939.0a1.95,1.95 0 1 0 3.9,0a1.95,1.95 0 1 0 -3.9,0ZM625.5,956.5a1.95,1.95 0 1 0 3.9,0a1.95,1.95 0 1 0 -3.9,0ZM629.9,914.5a1.95,1.95 0 1 0 3.9,0a1.95,1.95 0 1 0 -3.9,0ZM634.2,948.3a1.95,1.95 0 1 0 3.9,0a1.95,1.95 0 1 0 -3.9,0ZM638.5,931.9a1.95,1.95 0 1 0 3.9,0a1.95,1.95 0 1 0 -3.9,0ZM642.8,942.6a1.95,1.95 0 1 0 3.9,0a1.95,1.95 0 1 0 -3.9,0ZM647.1,938.0a1.95,1.95 0 1 0 3.9,0a1.95,1.95 0 1 0 -3.9,0ZM651.4,914.5a1.95,1.95 0 1 0 3.9,0a1.95,1.95 0 1 0 -3.9,0ZM655.8,918.9a1.95,1.95 0 1 0 3.9,0a1.95,1.95 0 1 0 -3.9,0ZM660.1,941.1a1.95,1.95 0 1 0 3.9,0a1.95,1.95 0 1 0 -3.9,0ZM664.4,945.7a1.95,1.95 0 1 0 3.9,0a1.95,1.95 0 1 0 -3.9,0ZM668.7,942.1a1.95,1.95 0 1 0 3.9,0a1.95,1.95 0 1 0 -3.9,0ZM673.0,930.2a1.95,1.95 0 1 0 3.9,0a1.95,1.95 0 1 0 -3.9,0ZM677.4,951.9a1.95,1.95 0 1 0 3.9,0a1.95,1.95 0 1 0 -3.9,0ZM681.7,942.1a1.95,1.95 0 1 0 3.9,0a1.95,1.95 0 1 0 -3.9,0ZM686.0,947.3a1.95,1.95 0 1 0 3.9,0a1.95,1.95 0 1 0 -3.9,0ZM690.3,938.0a1.95,1.95 0 1 0 3.9,0a1.95,1.95 0 1 0 -3.9,0ZM694.6,946.2a1.95,1.95 0 1 0 3.9,0a1.95,1.95 0 1 0 -3.9,0ZM699.0,965.6a1.95,1.95 0 1 0 3.9,0a1.95,1.95 0 1 0 -3.9,0ZM703.3,945.7a1.95,1.95 0 1 0 3.9,0a1.95,1.95 0 1 0 -3.9,0ZM707.6,947.3a1.95,1.95 0 1 0 3.9,0a1.95,1.95 0 1 0 -3.9,0ZM711.9,948.8a1.95,1.95 0 1 0 3.9,0a1.95,1.95 0 1 0 -3.9,0ZM716.2,945.2a1.95,1.95 0 1 0 3.9,0a1.95,1.95 0 1 0 -3.9,0ZM720.6,945.2a1.95,1.95 0 1 0 3.9,0a1.95,1.95 0 1 0 -3.9,0ZM724.9,946.2a1.95,1.95 0 1 0 3.9,0a1.95,1.95 0 1 0 -3.9,0ZM729.2,964.8a1.95,1.95 0 1 0 3.9,0a1.95,1.95 0 1 0 -3.9,0ZM733.5,963.5a1.95,1.95 0 1 0 3.9,0a1.95,1.95 0 1 0 -3.9,0ZM737.8,955.0a1.95,1.95 0 1 0 3.9,0a1.95,1.95 0 1 0 -3.9,0ZM742.1,965.6a1.95,1.95 0 1 0 3.9,0a1.95,1.95 0 1 0 -3.9,0ZM746.5,964.8a1.95,1.95 0 1 0 3.9,0a1.95,1.95 0 1 0 -3.9,0ZM750.8,968.7a1.95,1.95 0 1 0 3.9,0a1.95,1.95 0 1 0 -3.9,0ZM755.1,965.6a1.95,1.95 0 1 0 3.9,0a1.95,1.95 0 1 0 -3.9,0ZM759.4,965.6a1.95,1.95 0 1 0 3.9,0a1.95,1.95 0 1 0 -3.9,0ZM763.7,960.4a1.95,1.95 0 1 0 3.9,0a1.95,1.95 0 1 0 -3.9,0ZM768.1,967.4a1.95,1.95 0 1 0 3.9,0a1.95,1.95 0 1 0 -3.9,0ZM772.4,970.2a1.95,1.95 0 1 0 3.9,0a1.95,1.95 0 1 0 -3.9,0ZM776.7,956.9a1.95,1.95 0 1 0 3.9,0a1.95,1.95 0 1 0 -3.9,0ZM781.0,961.9a1.95,1.95 0 1 0 3.9,0a1.95,1.95 0 1 0 -3.9,0ZM785.3,969.4a1.95,1.95 0 1 0 3.9,0a1.95,1.95 0 1 0 -3.9,0ZM789.7,970.7a1.95,1.95 0 1 0 3.9,0a1.95,1.95 0 1 0 -3.9,0ZM794.0,970.1a1.95,1.95 0 1 0 3.9,0a1.95,1.95 0 1 0 -3.9,0ZM798.3,966.9a1.95,1.95 0 1 0 3.9,0a1.95,1.95 0 1 0 -3.9,0ZM802.6,965.1a1.95,1.95 0 1 0 3.9,0a1.95,1.95 0 1 0 -3.9,0ZM806.9,968.2a1.95,1.95 0 1 0 3.9,0a1.95,1.95 0 1 0 -3.9,0ZM811.3,958.1a1.95,1.95 0 1 0 3.9,0a1.95,1.95 0 1 0 -3.9,0ZM815.6,950.0a1.95,1.95 0 1 0 3.9,0a1.95,1.95 0 1 0 -3.9,0ZM819.9,968.2a1.95,1.95 0 1 0 3.9,0a1.95,1.95 0 1 0 -3.9,0ZM824.2,961.3a1.95,1.95 0 1 0 3.9,0a1.95,1.95 0 1 0 -3.9,0ZM828.5,976.3a1.95,1.95 0 1 0 3.9,0a1.95,1.95 0 1 0 -3.9,0ZM832.8,971.3a1.95,1.95 0 1 0 3.9,0a1.95,1.95 0 1 0 -3.9,0ZM837.2,964.4a1.95,1.95 0 1 0 3.9,0a1.95,1.95 0 1 0 -3.9,0ZM841.5,965.1a1.95,1.95 0 1 0 3.9,0a1.95,1.95 0 1 0 -3.9,0ZM845.8,969.4a1.95,1.95 0 1 0 3.9,0a1.95,1.95 0 1 0 -3.9,0ZM850.1,965.7a1.95,1.95 0 1 0 3.9,0a1.95,1.95 0 1 0 -3.9,0ZM854.4,959.4a1.95,1.95 0 1 0 3.9,0a1.95,1.95 0 1 0 -3.9,0ZM858.8,968.2a1.95,1.95 0 1 0 3.9,0a1.95,1.95 0 1 0 -3.9,0ZM863.1,972.5a1.95,1.95 0 1 0 3.9,0a1.95,1.95 0 1 0 -3.9,0ZM867.4,971.7a1.95,1.95 0 1 0 3.9,0a1.95,1.95 0 1 0 -3.9,0ZM871.7,966.9a1.95,1.95 0 1 0 3.9,0a1.95,1.95 0 1 0 -3.9,0ZM876.0,966.3a1.95,1.95 0 1 0 3.9,0a1.95,1.95 0 1 0 -3.9,0ZM880.4,957.5a1.95,1.95 0 1 0 3.9,0a1.95,1.95 0 1 0 -3.9,0ZM884.7,951.6a1.95,1.95 0 1 0 3.9,0a1.95,1.95 0 1 0 -3.9,0ZM889.0,957.5a1.95,1.95 0 1 0 3.9,0a1.95,1.95 0 1 0 -3.9,0ZM893.3,968.8a1.95,1.95 0 1 0 3.9,0a1.95,1.95 0 1 0 -3.9,0ZM897.6,967.5a1.95,1.95 0 1 0 3.9,0a1.95,1.95 0 1 0 -3.9,0ZM902.0,973.2a1.95,1.95 0 1 0 3.9,0a1.95,1.95 0 1 0 -3.9,0ZM906.3,970.7a1.95,1.95 0 1 0 3.9,0a1.95,1.95 0 1 0 -3.9,0ZM910.6,966.3a1.95,1.95 0 1 0 3.9,0a1.95,1.95 0 1 0 -3.9,0ZM914.9,968.2a1.95,1.95 0 1 0 3.9,0a1.95,1.95 0 1 0 -3.9,0ZM919.2,968.2a1.95,1.95 0 1 0 3.9,0a1.95,1.95 0 1 0 -3.9,0ZM923.5,970.1a1.95,1.95 0 1 0 3.9,0a1.95,1.95 0 1 0 -3.9,0ZM927.9,968.8a1.95,1.95 0 1 0 3.9,0a1.95,1.95 0 1 0 -3.9,0ZM932.2,977.6a1.95,1.95 0 1 0 3.9,0a1.95,1.95 0 1 0 -3.9,0ZM936.5,970.1a1.95,1.95 0 1 0 3.9,0a1.95,1.95 0 1 0 -3.9,0ZM940.8,973.8a1.95,1.95 0 1 0 3.9,0a1.95,1.95 0 1 0 -3.9,0ZM945.1,966.9a1.95,1.95 0 1 0 3.9,0a1.95,1.95 0 1 0 -3.9,0ZM949.5,970.7a1.95,1.95 0 1 0 3.9,0a1.95,1.95 0 1 0 -3.9,0ZM953.8,965.1a1.95,1.95 0 1 0 3.9,0a1.95,1.95 0 1 0 -3.9,0ZM958.1,978.2a1.95,1.95 0 1 0 3.9,0a1.95,1.95 0 1 0 -3.9,0ZM962.4,973.8a1.95,1.95 0 1 0 3.9,0a1.95,1.95 0 1 0 -3.9,0ZM966.7,973.2a1.95,1.95 0 1 0 3.9,0a1.95,1.95 0 1 0 -3.9,0ZM971.1,972.5a1.95,1.95 0 1 0 3.9,0a1.95,1.95 0 1 0 -3.9,0ZM975.4,973.8a1.95,1.95 0 1 0 3.9,0a1.95,1.95 0 1 0 -3.9,0ZM979.7,965.1a1.95,1.95 0 1 0 3.9,0a1.95,1.95 0 1 0 -3.9,0ZM984.0,963.8a1.95,1.95 0 1 0 3.9,0a1.95,1.95 0 1 0 -3.9,0ZM988.3,968.8a1.95,1.95 0 1 0 3.9,0a1.95,1.95 0 1 0 -3.9,0ZM992.6,974.5a1.95,1.95 0 1 0 3.9,0a1.95,1.95 0 1 0 -3.9,0ZM997.0,973.8a1.95,1.95 0 1 0 3.9,0a1.95,1.95 0 1 0 -3.9,0ZM1001.3,967.5a1.95,1.95 0 1 0 3.9,0a1.95,1.95 0 1 0 -3.9,0ZM1005.6,972.0a1.95,1.95 0 1 0 3.9,0a1.95,1.95 0 1 0 -3.9,0ZM1009.9,973.2a1.95,1.95 0 1 0 3.9,0a1.95,1.95 0 1 0 -3.9,0ZM1014.2,972.5a1.95,1.95 0 1 0 3.9,0a1.95,1.95 0 1 0 -3.9,0ZM1018.6,974.5a1.95,1.95 0 1 0 3.9,0a1.95,1.95 0 1 0 -3.9,0ZM1022.9,974.2a1.95,1.95 0 1 0 3.9,0a1.95,1.95 0 1 0 -3.9,0ZM1027.2,972.2a1.95,1.95 0 1 0 3.9,0a1.95,1.95 0 1 0 -3.9,0ZM1031.5,973.2a1.95,1.95 0 1 0 3.9,0a1.95,1.95 0 1 0 -3.9,0ZM1035.8,977.6a1.95,1.95 0 1 0 3.9,0a1.95,1.95 0 1 0 -3.9,0ZM1040.2,965.7a1.95,1.95 0 1 0 3.9,0a1.95,1.95 0 1 0 -3.9,0ZM1044.5,978.2a1.95,1.95 0 1 0 3.9,0a1.95,1.95 0 1 0 -3.9,0ZM1048.8,972.9a1.95,1.95 0 1 0 3.9,0a1.95,1.95 0 1 0 -3.9,0ZM1053.1,981.3a1.95,1.95 0 1 0 3.9,0a1.95,1.95 0 1 0 -3.9,0ZM1057.4,976.3a1.95,1.95 0 1 0 3.9,0a1.95,1.95 0 1 0 -3.9,0ZM1061.8,968.8a1.95,1.95 0 1 0 3.9,0a1.95,1.95 0 1 0 -3.9,0ZM1066.1,974.5a1.95,1.95 0 1 0 3.9,0a1.95,1.95 0 1 0 -3.9,0ZM1070.4,974.2a1.95,1.95 0 1 0 3.9,0a1.95,1.95 0 1 0 -3.9,0ZM1074.7,970.1a1.95,1.95 0 1 0 3.9,0a1.95,1.95 0 1 0 -3.9,0ZM1079.0,977.6a1.95,1.95 0 1 0 3.9,0a1.95,1.95 0 1 0 -3.9,0ZM1083.3,972.5a1.95,1.95 0 1 0 3.9,0a1.95,1.95 0 1 0 -3.9,0ZM1087.7,973.8a1.95,1.95 0 1 0 3.9,0a1.95,1.95 0 1 0 -3.9,0ZM1092.0,975.7a1.95,1.95 0 1 0 3.9,0a1.95,1.95 0 1 0 -3.9,0ZM1096.3,978.8a1.95,1.95 0 1 0 3.9,0a1.95,1.95 0 1 0 -3.9,0ZM1100.6,972.0a1.95,1.95 0 1 0 3.9,0a1.95,1.95 0 1 0 -3.9,0ZM1104.9,976.9a1.95,1.95 0 1 0 3.9,0a1.95,1.95 0 1 0 -3.9,0ZM1109.3,975.7a1.95,1.95 0 1 0 3.9,0a1.95,1.95 0 1 0 -3.9,0ZM1113.6,970.1a1.95,1.95 0 1 0 3.9,0a1.95,1.95 0 1 0 -3.9,0ZM1117.9,978.2a1.95,1.95 0 1 0 3.9,0a1.95,1.95 0 1 0 -3.9,0ZM1122.2,973.2a1.95,1.95 0 1 0 3.9,0a1.95,1.95 0 1 0 -3.9,0ZM1126.5,979.5a1.95,1.95 0 1 0 3.9,0a1.95,1.95 0 1 0 -3.9,0ZM1130.9,980.7a1.95,1.95 0 1 0 3.9,0a1.95,1.95 0 1 0 -3.9,0ZM1135.2,975.1a1.95,1.95 0 1 0 3.9,0a1.95,1.95 0 1 0 -3.9,0ZM1139.5,973.2a1.95,1.95 0 1 0 3.9,0a1.95,1.95 0 1 0 -3.9,0ZM1143.8,972.5a1.95,1.95 0 1 0 3.9,0a1.95,1.95 0 1 0 -3.9,0ZM1148.1,974.5a1.95,1.95 0 1 0 3.9,0a1.95,1.95 0 1 0 -3.9,0ZM1152.5,970.1a1.95,1.95 0 1 0 3.9,0a1.95,1.95 0 1 0 -3.9,0ZM1156.8,973.8a1.95,1.95 0 1 0 3.9,0a1.95,1.95 0 1 0 -3.9,0ZM1161.1,977.6a1.95,1.95 0 1 0 3.9,0a1.95,1.95 0 1 0 -3.9,0ZM1165.4,959.4a1.95,1.95 0 1 0 3.9,0a1.95,1.95 0 1 0 -3.9,0ZM1169.7,970.7a1.95,1.95 0 1 0 3.9,0a1.95,1.95 0 1 0 -3.9,0ZM1174.0,973.8a1.95,1.95 0 1 0 3.9,0a1.95,1.95 0 1 0 -3.9,0ZM1178.4,977.6a1.95,1.95 0 1 0 3.9,0a1.95,1.95 0 1 0 -3.9,0ZM1182.7,975.7a1.95,1.95 0 1 0 3.9,0a1.95,1.95 0 1 0 -3.9,0ZM1187.0,974.5a1.95,1.95 0 1 0 3.9,0a1.95,1.95 0 1 0 -3.9,0ZM1191.3,966.9a1.95,1.95 0 1 0 3.9,0a1.95,1.95 0 1 0 -3.9,0ZM1195.6,978.8a1.95,1.95 0 1 0 3.9,0a1.95,1.95 0 1 0 -3.9,0ZM1200.0,975.7a1.95,1.95 0 1 0 3.9,0a1.95,1.95 0 1 0 -3.9,0ZM1204.3,977.6a1.95,1.95 0 1 0 3.9,0a1.95,1.95 0 1 0 -3.9,0ZM1208.6,971.3a1.95,1.95 0 1 0 3.9,0a1.95,1.95 0 1 0 -3.9,0ZM1212.9,980.1a1.95,1.95 0 1 0 3.9,0a1.95,1.95 0 1 0 -3.9,0ZM1217.2,975.1a1.95,1.95 0 1 0 3.9,0a1.95,1.95 0 1 0 -3.9,0ZM1221.6,973.2a1.95,1.95 0 1 0 3.9,0a1.95,1.95 0 1 0 -3.9,0ZM1225.9,978.2a1.95,1.95 0 1 0 3.9,0a1.95,1.95 0 1 0 -3.9,0ZM1230.2,985.1a1.95,1.95 0 1 0 3.9,0a1.95,1.95 0 1 0 -3.9,0ZM1234.5,976.3a1.95,1.95 0 1 0 3.9,0a1.95,1.95 0 1 0 -3.9,0ZM1238.8,978.8a1.95,1.95 0 1 0 3.9,0a1.95,1.95 0 1 0 -3.9,0ZM1243.2,975.1a1.95,1.95 0 1 0 3.9,0a1.95,1.95 0 1 0 -3.9,0ZM1247.5,984.5a1.95,1.95 0 1 0 3.9,0a1.95,1.95 0 1 0 -3.9,0ZM1251.8,978.8a1.95,1.95 0 1 0 3.9,0a1.95,1.95 0 1 0 -3.9,0ZM1256.1,977.6a1.95,1.95 0 1 0 3.9,0a1.95,1.95 0 1 0 -3.9,0ZM1260.4,978.2a1.95,1.95 0 1 0 3.9,0a1.95,1.95 0 1 0 -3.9,0ZM1264.7,983.2a1.95,1.95 0 1 0 3.9,0a1.95,1.95 0 1 0 -3.9,0ZM1269.1,975.7a1.95,1.95 0 1 0 3.9,0a1.95,1.95 0 1 0 -3.9,0ZM1273.4,985.7a1.95,1.95 0 1 0 3.9,0a1.95,1.95 0 1 0 -3.9,0ZM1277.7,981.3a1.95,1.95 0 1 0 3.9,0a1.95,1.95 0 1 0 -3.9,0ZM1282.0,975.1a1.95,1.95 0 1 0 3.9,0a1.95,1.95 0 1 0 -3.9,0ZM1286.3,978.2a1.95,1.95 0 1 0 3.9,0a1.95,1.95 0 1 0 -3.9,0ZM1290.7,978.2a1.95,1.95 0 1 0 3.9,0a1.95,1.95 0 1 0 -3.9,0ZM1295.0,978.2a1.95,1.95 0 1 0 3.9,0a1.95,1.95 0 1 0 -3.9,0ZM1299.3,977.6a1.95,1.95 0 1 0 3.9,0a1.95,1.95 0 1 0 -3.9,0ZM1303.6,978.8a1.95,1.95 0 1 0 3.9,0a1.95,1.95 0 1 0 -3.9,0ZM1307.9,983.2a1.95,1.95 0 1 0 3.9,0a1.95,1.95 0 1 0 -3.9,0ZM1312.3,977.6a1.95,1.95 0 1 0 3.9,0a1.95,1.95 0 1 0 -3.9,0ZM1316.6,979.5a1.95,1.95 0 1 0 3.9,0a1.95,1.95 0 1 0 -3.9,0ZM1320.9,981.3a1.95,1.95 0 1 0 3.9,0a1.95,1.95 0 1 0 -3.9,0ZM1325.2,981.3a1.95,1.95 0 1 0 3.9,0a1.95,1.95 0 1 0 -3.9,0ZM1329.5,980.7a1.95,1.95 0 1 0 3.9,0a1.95,1.95 0 1 0 -3.9,0ZM1333.9,975.7a1.95,1.95 0 1 0 3.9,0a1.95,1.95 0 1 0 -3.9,0ZM1338.2,983.9a1.95,1.95 0 1 0 3.9,0a1.95,1.95 0 1 0 -3.9,0ZM1342.5,981.9a1.95,1.95 0 1 0 3.9,0a1.95,1.95 0 1 0 -3.9,0ZM1346.8,983.2a1.95,1.95 0 1 0 3.9,0a1.95,1.95 0 1 0 -3.9,0ZM1351.1,978.8a1.95,1.95 0 1 0 3.9,0a1.95,1.95 0 1 0 -3.9,0ZM1355.4,983.9a1.95,1.95 0 1 0 3.9,0a1.95,1.95 0 1 0 -3.9,0ZM1359.8,970.7a1.95,1.95 0 1 0 3.9,0a1.95,1.95 0 1 0 -3.9,0ZM1364.1,983.9a1.95,1.95 0 1 0 3.9,0a1.95,1.95 0 1 0 -3.9,0ZM1368.4,980.7a1.95,1.95 0 1 0 3.9,0a1.95,1.95 0 1 0 -3.9,0ZM1372.7,979.5a1.95,1.95 0 1 0 3.9,0a1.95,1.95 0 1 0 -3.9,0ZM1377.0,981.9a1.95,1.95 0 1 0 3.9,0a1.95,1.95 0 1 0 -3.9,0ZM1381.4,980.7a1.95,1.95 0 1 0 3.9,0a1.95,1.95 0 1 0 -3.9,0ZM1385.7,971.3a1.95,1.95 0 1 0 3.9,0a1.95,1.95 0 1 0 -3.9,0ZM1390.0,983.9a1.95,1.95 0 1 0 3.9,0a1.95,1.95 0 1 0 -3.9,0ZM1394.3,972.5a1.95,1.95 0 1 0 3.9,0a1.95,1.95 0 1 0 -3.9,0ZM1398.6,983.9a1.95,1.95 0 1 0 3.9,0a1.95,1.95 0 1 0 -3.9,0ZM1403.0,981.3a1.95,1.95 0 1 0 3.9,0a1.95,1.95 0 1 0 -3.9,0ZM1407.3,983.2a1.95,1.95 0 1 0 3.9,0a1.95,1.95 0 1 0 -3.9,0ZM1411.6,980.1a1.95,1.95 0 1 0 3.9,0a1.95,1.95 0 1 0 -3.9,0ZM1415.9,979.5a1.95,1.95 0 1 0 3.9,0a1.95,1.95 0 1 0 -3.9,0ZM1420.2,981.3a1.95,1.95 0 1 0 3.9,0a1.95,1.95 0 1 0 -3.9,0ZM1424.5,976.9a1.95,1.95 0 1 0 3.9,0a1.95,1.95 0 1 0 -3.9,0Z" fill="#ffea00"/>
<text transform="translate(994.00,1048.80) scale(1,1.07)" text-anchor="middle" class="tb">Epoch</text>
<text transform="translate(514.2,848.1) rotate(-90) scale(1.07,1)" text-anchor="middle" class="tb">Loss</text>
<rect x="929.8" y="653.8" width="8.4" height="8.2" fill="#ffea00" stroke="#000" stroke-width="1.4"/>
<text letter-spacing="0.9" transform="translate(945.00,662.80) scale(1,1.07)" text-anchor="start" class="t">Loss</text>
<g id="icons" fill="none" stroke="#fff">
  <!-- hamburger -->
  <path d="M147,26.2H170.5M147,33.1H170.5M147,40H170.5" stroke-width="2.8"/>
  <path d="M185,54.6H195.4L190.2,60.4Z" fill="#bdbdbd" stroke="none"/>
  <!-- home -->
  <path d="M227.1,42.8V30L237.3,21.6L247.5,30V42.8H241.6V37.6H233V42.8Z" stroke-width="2.5" stroke-linejoin="round"/>
  <!-- window controls -->
  <path d="M1596,31.5H1613.8" stroke-width="1.8"/>
  <rect x="1675.6" y="24.4" width="16.4" height="15.8" stroke-width="1.7"/>
  <path d="M1754.4,24.2L1771.2,40.4M1771.2,24.2L1754.4,40.4" stroke-width="1.7"/>
  <!-- grid icon -->
  <path d="M136.1,84H143.1V91.3H136.1ZM147.2,84H154.2V91.3H147.2ZM136.1,95.2H143.1V102.6H136.1ZM147.2,95.2H154.2V102.6H147.2Z" stroke-width="2.1"/>
  <!-- chart icon -->
  <path d="M186.5,82.5V103H208" stroke-width="2.2"/>
  <path d="M184.1,84L186.5,80.6L188.9,84ZM206.8,100.6L210,103L206.8,105.4Z" fill="#fff" stroke="none"/>
  <path d="M190.4,95V99.6M197.9,93.4V99.6M205.6,91V99.6" stroke-width="2.4"/>
  <path d="M190.4,90C191.5,87.5 193.3,86.4 195,87.4C197,88.6 198.4,91 200.4,90.4C202.8,89.6 204.8,87 206.4,84.8" stroke-width="2" stroke-linecap="round"/>
  <!-- image icon -->
  <rect x="237.4" y="84.2" width="17.4" height="13.6" stroke-width="2.4"/>
  <path d="M238.6,90.4L241.8,88L247.6,92L251.6,90.2L253.6,91.6" stroke-width="1.8"/>
  <path d="M256,88.8H260.9V102.8H242.5" stroke-width="2.2"/>
  <path d="M257.6,92.6H260M257.6,96.4H260" stroke-width="1.8"/>
  <!-- zoom -->
  <circle cx="1150.6" cy="93" r="9.6" stroke-width="1.9"/>
  <path d="M1146.4,93H1154.8" stroke-width="2"/>
  <rect x="1188" y="88.2" width="214" height="9" fill="#7d7d7d" stroke="none"/>
  <rect x="1178.6" y="83" width="19.8" height="19.8" rx="4.5" fill="#2e9bf6" stroke="none"/>
  <circle cx="1429.8" cy="93" r="9.6" stroke-width="1.9"/>
  <path d="M1425.4,93H1434.2M1429.8,88.6V97.4" stroke-width="2"/>
  <!-- edit icon -->
  <path d="M430,345.6H422.2A3.4,3.4 0 0 0 418.8,349V360.4A3.4,3.4 0 0 0 422.2,363.8H433.7A3.4,3.4 0 0 0 437.1,360.4V352.6" stroke-width="2.4" stroke-linecap="round"/>
  <path d="M426,356.6L436.8,345.8" stroke-width="2.4" stroke-linecap="round"/>
  <!-- logo -->
  <g fill="#fff" stroke="none">
    <path d="M1577.3,122.8L1595.8,146.2L1591,149.4Z"/>
    <path d="M1597.2,117.8L1633.6,132.6L1632.4,133.6L1595.4,122Z"/>
    <path d="M1591.4,127.8L1632.8,135.2L1625,148L1597,136Z"/>
    <path d="M1691.7,122.8L1673.2,146.2L1678,149.4Z"/>
    <path d="M1671.8,117.8L1635.4,132.6L1636.6,133.6L1673.6,122Z"/>
    <path d="M1677.6,127.8L1636.2,135.2L1644,148L1672,136Z"/>
  </g>
  <!-- plus -->
  <path d="M1662,295.3H1681.2M1671.5,285.2V305.8" stroke-width="4.4"/>
  <!-- trash -->
  <g stroke="#8a8a8a">
    <path d="M1711,289.6H1731.8" stroke-width="1.8"/>
    <path d="M1716.6,289.6V286.2H1726.6V289.6" stroke-width="1.8"/>
    <path d="M1714.2,290V304.9H1729.2V290" stroke-width="1.9"/>
    <path d="M1717.9,292V303M1721.8,292V303M1725.7,292V303" stroke-width="1.7"/>
  </g>
  <!-- share -->
  <g stroke="#8a8a8a">
    <path d="M1767.4,292.6H1764.6A3.4,3.4 0 0 0 1761.2,296V301A3.4,3.4 0 0 0 1764.6,304.4H1776.4A3.4,3.4 0 0 0 1779.8,301V296A3.4,3.4 0 0 0 1776.4,292.6H1773.6" stroke-width="2"/>
    <path d="M1770.5,298.6V286.4M1766.6,289.8L1770.5,286L1774.4,289.8" stroke-width="2"/>
  </g>
  <!-- pause / stop -->
  <rect x="1567" y="1040.6" width="5.6" height="21.4" fill="#fff" stroke="none"/>
  <rect x="1577.8" y="1040.6" width="5.6" height="21.4" fill="#fff" stroke="none"/>
  <rect x="1684" y="1042.5" width="18" height="18" fill="#fff" stroke="none"/>
</g>
</svg>
</body></html>
